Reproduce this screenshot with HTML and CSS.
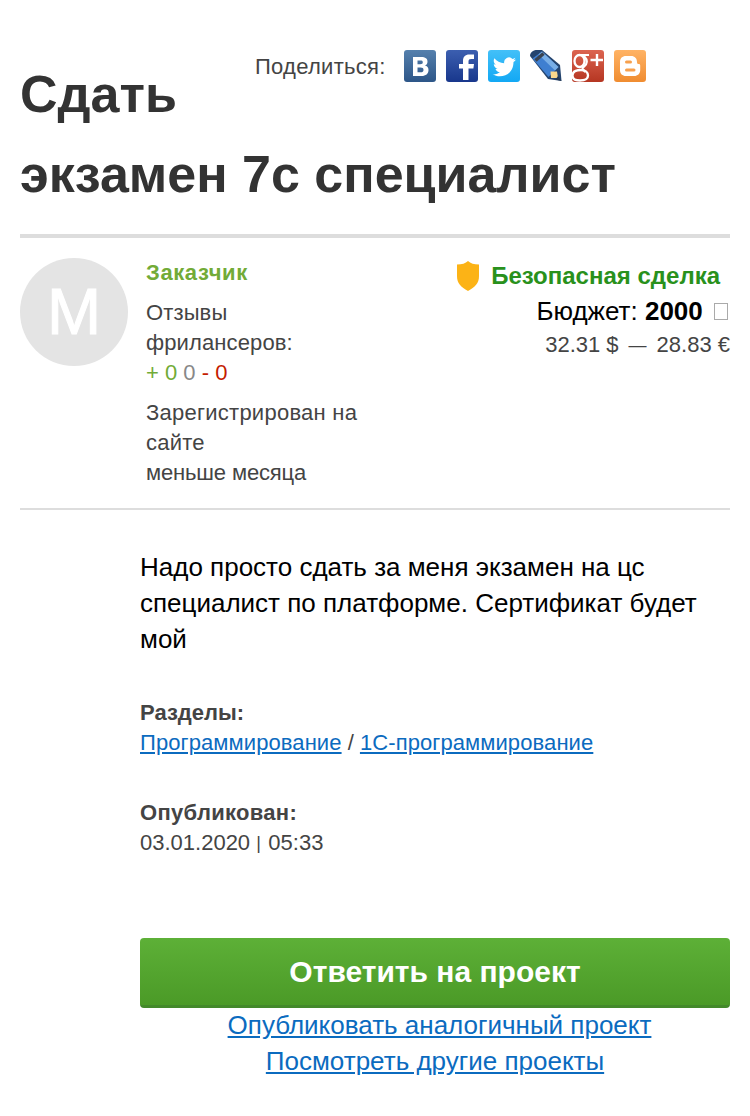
FILE: index.html
```html
<!DOCTYPE html>
<html lang="ru">
<head>
    <meta charset="UTF-8">
    <meta name="viewport" content="width=device-width, initial-scale=1.0">
    <title>Сдать экзамен 7с специалист</title>
    <link rel="stylesheet" href="styles.css">
</head>
<body>

<div class="page">
    <div class="header">
        <div class="share">
            <span class="share-label">Поделиться:</span>
            <a href="#" title="ВКонтакте">
                <svg viewBox="0 0 32 32">
                    <defs>
                        <linearGradient id="vk" x1="0" y1="0" x2="0" y2="1">
                            <stop offset="0" stop-color="#5580ad"/>
                            <stop offset="1" stop-color="#2d5688"/>
                        </linearGradient>
                    </defs>
                    <rect width="32" height="32" rx="3" fill="url(#vk)"/>
                    <path fill="#fff" fill-rule="evenodd" d="M9 7h8c4.500 0 6.500 1.500 6.500 4.700 0 2-1 3.200-2.600 3.800 2.300.5 3.600 2 3.600 4.500 0 3.700-2.600 6-7 6H9zm4.500 3.500v3.700h2.700c1.700 0 2.600-.4 2.600-1.900 0-1.400-.9-1.800-2.600-1.800zm0 7v4.800h3c2 0 3-.7 3-2.400 0-1.600-1-2.400-3-2.400z"/>
                </svg>
            </a>
            <a href="#" title="Facebook">
                <svg viewBox="0 0 32 32">
                    <defs>
                        <linearGradient id="fb" x1="0" y1="0" x2="0" y2="1">
                            <stop offset="0" stop-color="#3c5fb0"/>
                            <stop offset="1" stop-color="#18378c"/>
                        </linearGradient>
                    </defs>
                    <rect width="32" height="32" rx="3" fill="url(#fb)"/>
                    <path fill="#fff" d="M17 30V18.500h-4V14h4v-3c0-4.300 2.200-6.500 6.300-6.500H28V9h-2.800c-2 0-2.700.8-2.700 2.500V14H28l-.6 4.500h-4.900V30z"/>
                </svg>
            </a>
            <a href="#" title="Twitter">
                <svg viewBox="0 0 32 32">
                    <defs>
                        <linearGradient id="tw" x1="0" y1="0" x2="0" y2="1">
                            <stop offset="0" stop-color="#43c0f8"/>
                            <stop offset="1" stop-color="#12a8f4"/>
                        </linearGradient>
                    </defs>
                    <rect width="32" height="32" rx="3" fill="url(#tw)"/>
                    <path fill="#fff" d="M28 9.500c-.9.400-1.700.7-2.600.8.900-.6 1.600-1.500 2-2.600-.9.600-1.900 1-2.900 1.200a4.900 4.900 0 0 0-8.300 4.400c-4-.2-7.500-2.100-9.800-5-1.300 2.200-.6 5 1.500 6.400-.8 0-1.500-.2-2.100-.6 0 2.300 1.600 4.300 3.800 4.800-.7.200-1.400.2-2.100.1.600 1.900 2.400 3.200 4.400 3.300A9.600 9.600 0 0 1 4.500 24.300c7.600 4.600 20.800 1.600 21-12.300 1-.6 1.800-1.500 2.500-2.500z"/>
                </svg>
            </a>
            <a href="#" title="LiveJournal">
                <svg viewBox="0 0 32 32">
                    <path d="M0 6Q0 2 4 .5T12 0L30 15 31.500 31 18 29z" fill="#24446e"/>
                    <path d="M2.500 8.500L12 1.500 28.500 17 18.500 27z" fill="#3f7fd0"/>
                    <path d="M8.500 4.500L12 1.500 28.500 17 25 20.500z" fill="#78aee6"/>
                    <path d="M5.500 10.500L13.500 3.500" stroke="#3a4350" stroke-width="3.500"/>
                    <path d="M20.500 21.500h6.500l1 6.500h-7z" fill="#f9d88c"/>
                    <path d="M28 26l3.500 5-6-1.500z" fill="#263951"/>
                </svg>
            </a>
            <a href="#" title="Google+">
                <svg viewBox="0 0 32 32">
                    <defs>
                        <linearGradient id="gp" x1="0" y1="0" x2="0" y2="1">
                            <stop offset="0" stop-color="#dc6450"/>
                            <stop offset="1" stop-color="#b53622"/>
                        </linearGradient>
                    </defs>
                    <rect width="32" height="32" rx="3" fill="url(#gp)"/>
                    <g fill="none" stroke="#fff">
                        <ellipse cx="7.500" cy="11" rx="5" ry="6" stroke-width="2.300"/>
                        <path d="M8 5h9M12 6c4 4 3.500 8 0 10.500-3 2.200-1 3.500 1.500 5.500" stroke-width="2.200"/>
                        <path d="M9 20c-6 0-8.500 2-8.500 5.500S3 30.500 8 30.500s8-2 8-5-2.500-5.500-7-5.500z" stroke-width="2.300"/>
                        <path d="M18.500 10h12.500M25 4v12" stroke-width="2.400"/>
                    </g>
                </svg>
            </a>
            <a href="#" title="Blogger">
                <svg viewBox="0 0 32 32">
                    <defs>
                        <linearGradient id="bl" x1="0" y1="0" x2="0" y2="1">
                            <stop offset="0" stop-color="#ffb365"/>
                            <stop offset="1" stop-color="#f08c30"/>
                        </linearGradient>
                    </defs>
                    <rect width="32" height="32" rx="3" fill="url(#bl)"/>
                    <path fill="#fff" d="M12 6h5c3.800 0 6 2.500 6 6 0 1.500.4 2 1.800 2 1 0 1.400.6 1.400 1.500V20c0 3.800-2.500 6-6 6H12c-3.700 0-6-2.300-6-6v-8c0-3.700 2.300-6 6-6z"/>
                    <path d="M12.500 12h4M12.500 20h7.500" stroke="#f7a04d" stroke-width="3" stroke-linecap="round"/>
                </svg>
            </a>
        </div>
        <h1><span>Сдать</span> <span>экзамен 7с специалист</span></h1>
    </div>

    <div class="info">
        <div class="avatar">M</div>
        <div class="customer">
            <p class="role">Заказчик</p>
            <p><span class="reviews">Отзывы фрилансеров:</span><br>
                <span class="plus">+ 0</span> <span class="neutral">0</span> <span class="minus">- 0</span></p>
            <p><span class="registered">Зарегистрирован на сайте</span><br><span class="period">меньше месяца</span></p>
        </div>
        <div class="budget">
            <div class="safe">
                <svg viewBox="0 0 24 30">
                    <path d="M12 0c2.500 2.500 6 3.500 11 3.500V15c0 7.500-4 11-11 15C5 26 1 22.500 1 15V3.500C6 3.500 9.500 2.500 12 0z" fill="#fcb316"/>
                </svg>
                <span>Безопасная сделка</span>
            </div>
            <div class="price">Бюджет: <b>2000</b> <span class="currency"></span></div>
            <div class="rates"><span>32.31 $</span><span class="dash">—</span><span>28.83 €</span></div>
        </div>
    </div>

    <div class="content">
        <p class="description">Надо просто сдать за меня экзамен на цс специалист по платформе. Сертификат будет мой</p>

        <div class="block sections">
            <b>Разделы:</b><br>
            <a href="#">Программирование</a> / <a href="#">1С-программирование</a>
        </div>

        <div class="block">
            <b class="published">Опубликован:</b><br>
            03.01.2020 <span class="bar">|</span> 05:33
        </div>

        <a class="button" href="#">Ответить на проект</a>

        <div class="links">
            <a class="link-new" href="#">Опубликовать аналогичный проект</a><br>
            <a href="#">Посмотреть другие проекты</a>
        </div>
    </div>
</div>

</body>
</html>
```
FILE: styles.css
```css
body {
    font-family: "Liberation Sans", Arial, sans-serif;
    font-size: 22px;
    line-height: 30px;
    color: #444;
    margin: 0;
    background-color: #fff;
}

p {
    margin: 0;
}

a {
    color: #0b6bbf;
}

.page {
    padding: 50px 20px 0;
}

.header {
    height: 184px;
    border-bottom: 4px solid #ddd;
}

.share {
    float: right;
    display: flex;
    align-items: center;
    gap: 10px;
    width: 475px;
    height: 32px;
}

.share-label {
    width: 131px;
    margin-right: 8px;
    padding-top: 2px;
    letter-spacing: 0.27px;
}

.share a, .share svg {
    display: block;
    width: 32px;
    height: 32px;
}

h1 {
    margin: 0;
    padding-top: 4px;
    font-size: 52px;
    line-height: 80px;
    color: #333;
}

h1 span {
    display: inline-block;
}

.info {
    display: flex;
    height: 250px;
    padding-top: 20px;
    border-bottom: 2px solid #ddd;
}

.avatar {
    width: 108px;
    height: 108px;
    margin-right: 18px;
    border-radius: 50%;
    background-color: #e4e4e4;
    color: #fff;
    font-size: 65px;
    line-height: 107px;
    text-align: center;
    -webkit-text-stroke: 1px #fff;
}

.customer {
    width: 230px;
}

.customer p {
    margin-bottom: 10px;
}

.customer .role {
    font-weight: bold;
    letter-spacing: 0.6px;
    color: #72ab37;
}

.reviews {
    letter-spacing: 0.12px;
}

.registered {
    letter-spacing: 0.25px;
}

.period {
    letter-spacing: -0.15px;
}

.plus {
    color: #72ab37;
}

.neutral {
    color: #888;
}

.minus {
    color: #c41c00;
}

.budget {
    flex: 1;
    text-align: right;
    white-space: nowrap;
}

.safe {
    display: flex;
    justify-content: flex-end;
    align-items: center;
    gap: 11px;
    height: 36px;
    padding-right: 10px;
    font-size: 24px;
    font-weight: bold;
    color: #29911c;
}

.safe svg {
    width: 24px;
    height: 30px;
}

.price {
    font-size: 26px;
    line-height: 34px;
    color: #000;
}

.currency {
    display: inline-block;
    width: 12px;
    height: 15px;
    margin: 0 2px 0 4px;
    border: 1px solid #aaa;
}

.rates {
    display: flex;
    justify-content: flex-end;
    gap: 10px;
    padding-top: 2px;
}

.dash {
    font-size: 18px;
}

.content {
    padding: 39px 0 0 120px;
}

.description {
    margin-bottom: 41px;
    font-size: 26px;
    line-height: 36px;
    color: #000;
}

.block {
    margin-bottom: 40px;
}

.sections a {
    letter-spacing: 0.09px;
}

.published {
    letter-spacing: 0.3px;
}

.bar {
    display: inline-block;
    width: 6px;
    font-size: 18px;
    line-height: 20px;
    vertical-align: 1px;
}

.button {
    display: block;
    height: 67px;
    margin-top: 80px;
    border-bottom: 3px solid #43892a;
    border-radius: 4px;
    background: linear-gradient(#5db037, #4b9a27);
    color: #fff;
    font-size: 30px;
    font-weight: bold;
    line-height: 68px;
    text-align: center;
    text-decoration: none;
}

.links {
    margin-top: -1px;
    font-size: 26px;
    line-height: 36px;
    text-align: center;
}

.link-new {
    margin-left: 9px;
}
```
